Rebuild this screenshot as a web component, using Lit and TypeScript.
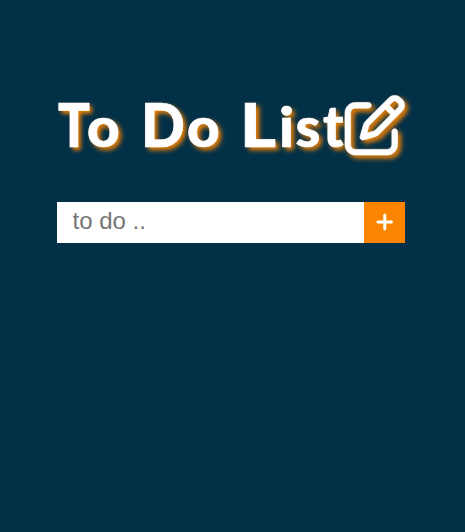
import { LitElement, html, css } from "lit";
import { customElement } from "lit/decorators.js";
import { styleMap } from "lit/directives/style-map.js";

interface Glyph {
  char: string;
  slot: number;
  size: number;
  stretch: number;
}

const glyph = (char: string, slot: number, size = 60, stretch = 1): Glyph => ({ char, slot, size, stretch });

const TITLE: Glyph[] = [
  glyph("T", 29, 60, 0.88),
  glyph("o", 36, 55, 1.03),
  glyph(" ", 18),
  glyph("D", 45.5, 60, 0.96),
  glyph("o", 36, 55, 1.03),
  glyph(" ", 17.8),
  glyph("L", 39.1, 60, 1.15),
  glyph("i", 16, 56, 1.04),
  glyph("s", 27.8, 56),
  glyph("t", 22, 57, 0.95),
];

@customElement("app-root")
export class AppRoot extends LitElement {
  static styles = css`
    :host {
      display: flex;
      flex-direction: column;
      align-items: flex-start;
      box-sizing: border-box;
      height: 532px;
      padding: 86px 0 0 57px;
      background: #023047;
      overflow: hidden;
    }
    .title {
      display: flex;
      align-items: flex-start;
      height: 76px;
      margin: 0 0 40px;
      color: #fff;
      font: 900 60px/76px Lato, sans-serif;
      -webkit-text-stroke: 0.7px #fff;
      text-shadow: 3px 3px 5px #fb8500;
      white-space: pre;
    }
    .words {
      display: flex;
      align-items: baseline;
      box-sizing: border-box;
      width: 288px;
      padding-left: 1px;
    }
    .letter {
      flex: none;
      transform-origin: left;
    }
    .edit {
      flex: none;
      width: 60px;
      height: 60px;
      margin-top: 8.5px;
      overflow: visible;
      stroke: #fff;
      stroke-width: 6;
      filter: drop-shadow(3px 3px 2.5px #fb8500);
    }
    .form {
      display: flex;
      width: 348px;
      height: 41px;
    }
    .field {
      flex: 1;
      min-width: 0;
      box-sizing: border-box;
      border: 0;
      border-radius: 0;
      outline: 0;
      padding: 0 15px 3px 15.5px;
      background: #fff;
      font: 24px "Liberation Sans", Arial, sans-serif;
    }
    .field::placeholder {
      color: #757575;
    }
    .add {
      display: flex;
      align-items: center;
      justify-content: center;
      width: 41px;
      padding: 0;
      border: 0;
      background: #fb8500;
    }
    .plus {
      width: 17.5px;
      height: 20px;
      margin-top: -2px;
      stroke: #fff;
      stroke-width: 14;
    }
  `;

  render() {
    return html`
      <h1 class="title">
        <span class="words">${TITLE.map(
          ({ char, slot, size, stretch }) =>
            html`<span
              class="letter"
              style=${styleMap({
                width: `${slot}px`,
                fontSize: `${size}px`,
                transform: stretch === 1 ? "none" : `scaleX(${stretch})`,
              })}
              >${char}</span
            >`
        )}</span>
        <svg class="edit" viewBox="0 0 512 512" fill="#fff">
          <path d="M441 58.9L453.1 71c9.4 9.4 9.4 24.6 0 33.9L424 134.1 377.9 88 407 58.9c9.4-9.4 24.6-9.4 33.9 0zM209.8 256.2L344 121.9 390.1 168 255.8 302.2c-2.9 2.9-6.5 5-10.4 6.1l-58.5 16.7 16.7-58.5c1.1-3.9 3.2-7.5 6.1-10.4zM373.1 25L175.8 222.2c-8.7 8.7-15 19.4-18.3 31.1l-28.6 100c-2.4 8.4-.1 17.4 6.1 23.6s15.2 8.5 23.6 6.1l100-28.6c11.8-3.4 22.5-9.7 31.1-18.3L487 138.9c28.1-28.1 28.1-73.7 0-101.8L474.9 25C446.8-3.1 401.2-3.1 373.1 25zM88 64C39.4 64 0 103.4 0 152V424c0 48.6 39.4 88 88 88H360c48.6 0 88-39.4 88-88V312c0-13.3-10.7-24-24-24s-24 10.7-24 24V424c0 22.1-17.9 40-40 40H88c-22.1 0-40-17.9-40-40V152c0-22.1 17.9-40 40-40H200c13.3 0 24-10.7 24-24s-10.7-24-24-24H88z"/>
        </svg>
      </h1>
      <div class="form">
        <input class="field" type="text" placeholder="to do .." />
        <button class="add" aria-label="Add">
          <svg class="plus" viewBox="0 0 448 512" fill="#fff">
            <path d="M256 80c0-17.7-14.3-32-32-32s-32 14.3-32 32V224H48c-17.7 0-32 14.3-32 32s14.3 32 32 32H192V432c0 17.7 14.3 32 32 32s32-14.3 32-32V288H400c17.7 0 32-14.3 32-32s-14.3-32-32-32H256V80z"/>
          </svg>
        </button>
      </div>
    `;
  }
}
